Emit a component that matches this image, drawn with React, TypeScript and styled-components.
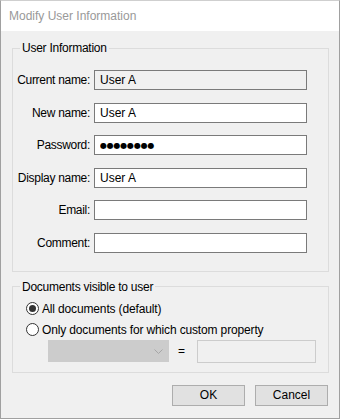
import React from "react"
import styled, { createGlobalStyle } from "styled-components"

const GlobalStyle = createGlobalStyle`
    html, body {
        margin: 0;
        padding: 0;
        background: #f0f0f0;
    }
    body {
        font-family: "Segoe UI", "Liberation Sans", Arial, sans-serif;
        font-size: 12px;
        color: #000;
    }
`

const fields = [
    { label: "Current name:", value: "User A", readOnly: true },
    { label: "New name:", value: "User A" },
    { label: "Password:", value: "●●●●●●●●", secret: true },
    { label: "Display name:", value: "User A" },
    { label: "Email:", value: "" },
    { label: "Comment:", value: "" }
]

const Chevron = () => (
    <svg width="9" height="5" viewBox="0 0 9 5">
        <path d="M0.5 0.5 L4.5 4.5 L8.5 0.5" fill="none" stroke="#a6a6a6" strokeWidth="1" />
    </svg>
)

const App = () => {
    return (
        <>
            <GlobalStyle />
            <Window>
                <TitleBar>Modify User Information</TitleBar>
                <Body>
                    <Group>
                        <Legend>User Information</Legend>
                        <FormGrid>
                            {fields.map(f => (
                                <React.Fragment key={f.label}>
                                    <Label>{f.label}</Label>
                                    <TextBox
                                        defaultValue={f.value}
                                        readOnly={f.readOnly}
                                        $readOnly={f.readOnly}
                                        $secret={f.secret}
                                    />
                                </React.Fragment>
                            ))}
                        </FormGrid>
                    </Group>

                    <Group $spaced>
                        <Legend>Documents visible to user</Legend>
                        <Options>
                            <RadioRow>
                                <Radio $checked />
                                All documents (default)
                            </RadioRow>
                            <RadioRow>
                                <Radio />
                                Only documents for which custom property
                            </RadioRow>
                            <PropertyRow>
                                <Combo>
                                    <Chevron />
                                </Combo>
                                <Equals>=</Equals>
                                <DisabledBox />
                            </PropertyRow>
                        </Options>
                    </Group>

                    <Buttons>
                        <Button>OK</Button>
                        <Button>Cancel</Button>
                    </Buttons>
                </Body>
            </Window>
        </>
    )
}

const Window = styled.div`
    width: 340px;
    height: 419px;
    box-sizing: border-box;
    border: 1px solid #a0a0a0;
    border-top-color: #cfcfcf;
    background: #f0f0f0;
    display: flex;
    flex-direction: column;
`

const TitleBar = styled.div`
    height: 30px;
    flex-shrink: 0;
    background: #fff;
    display: flex;
    align-items: center;
    padding-left: 8px;
    color: #999;
`

const Body = styled.div`
    flex: 1;
    display: flex;
    flex-direction: column;
    padding: 10px 10px 0 11px;
    letter-spacing: -0.15px;
`

const Group = styled.fieldset<{ $spaced?: boolean }>`
    margin: ${p => (p.$spaced ? "8px" : "0")} 0 0;
    padding: 0;
    min-width: 0;
    border: 1px solid #dcdcdc;
`

const Legend = styled.legend`
    margin-left: 7px;
    padding: 0 2px;
    line-height: 14px;
    letter-spacing: -0.25px;
`

const FormGrid = styled.div`
    display: grid;
    grid-template-columns: 72px 213px;
    column-gap: 4px;
    row-gap: 12.6px;
    padding: 15px 20px 18px 5px;
`

const Label = styled.label`
    align-self: center;
    justify-self: end;
    white-space: nowrap;
    letter-spacing: -0.3px;
`

const TextBox = styled.input<{ $readOnly?: boolean; $secret?: boolean }>`
    height: 20px;
    box-sizing: border-box;
    border: 1px solid #7a7a7a;
    padding: 0 0 0 5px;
    margin: 0;
    font-family: ${p => (p.$secret ? '"DejaVu Sans", sans-serif' : "inherit")};
    font-size: ${p => (p.$secret ? "8px" : "12px")};
    letter-spacing: ${p => (p.$secret ? "-0.2px" : "normal")};
    color: #000;
    background: ${p => (p.$readOnly ? "#f0f0f0" : "#fff")};
    outline: none;
`

const Options = styled.div`
    display: flex;
    flex-direction: column;
    padding: 7px 0 9px 13px;
`

const RadioRow = styled.label`
    display: flex;
    align-items: center;
    gap: 3px;
    height: 16px;
    & + & {
        margin-top: 5px;
    }
`

const Radio = styled.span<{ $checked?: boolean }>`
    width: 13px;
    height: 13px;
    box-sizing: border-box;
    border: 1px solid #333;
    border-radius: 50%;
    background: #fff;
    display: flex;
    align-items: center;
    justify-content: center;

    &::after {
        content: "";
        width: 7px;
        height: 7px;
        border-radius: 50%;
        background: ${p => (p.$checked ? "#333" : "transparent")};
    }
`

const PropertyRow = styled.div`
    display: flex;
    align-items: center;
    margin-top: 2px;
    padding-left: 22px;
`

const Combo = styled.div`
    width: 121px;
    height: 22px;
    box-sizing: border-box;
    border: 1px solid #cccccc;
    background: #cccccc;
    display: flex;
    align-items: center;
    justify-content: flex-end;
    padding-right: 5px;
`

const Equals = styled.span`
    margin: 0 12px 0 9px;
`

const DisabledBox = styled.div`
    width: 119px;
    height: 23px;
    box-sizing: border-box;
    border: 1px solid #cccccc;
    background: #f0f0f0;
`

const Buttons = styled.div`
    display: flex;
    justify-content: flex-end;
    gap: 10px;
    margin-top: 12px;
    padding-right: 1px;
`

const Button = styled.button`
    width: 73px;
    height: 21px;
    box-sizing: border-box;
    border: 1px solid #adadad;
    background: #e1e1e1;
    font: inherit;
    color: #000;
    padding: 0;
`

export default App
